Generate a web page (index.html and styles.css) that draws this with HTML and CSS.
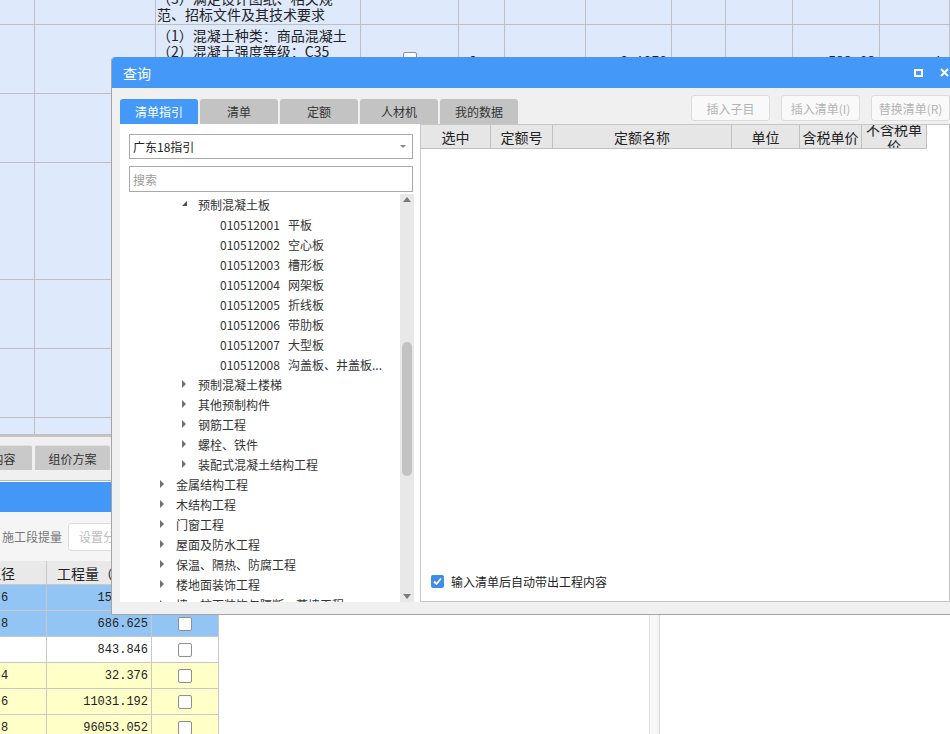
FILE: index.html
```html
<!DOCTYPE html>
<html lang="zh-CN">
<head>
<meta charset="utf-8">
<title>查询</title>
<link rel="stylesheet" href="styles.css">
</head>
<body>
<div class="page">
  <div class="top">
    <div class="trow r1">
      <div class="c"></div><div class="c"></div>
      <div class="c txt bot">（3）满足设计图纸、相关规<br>范、招标文件及其技术要求</div>
      <div class="c"></div><div class="c"></div><div class="c"></div><div class="c"></div><div class="c"></div><div class="c"></div><div class="c"></div><div class="c"></div>
    </div>
    <div class="trow r2">
      <div class="c"></div><div class="c"></div>
      <div class="c txt">（1）混凝土种类：商品混凝土<br>（2）混凝土强度等级：C35</div>
      <div class="c mid center"><span class="cb"></span></div>
      <div class="c mid num-l">0</div>
      <div class="c"></div>
      <div class="c mid num-r">0.1073</div>
      <div class="c"></div><div class="c"></div>
      <div class="c mid num-r">588.68</div>
      <div class="c mid num-far">1.10</div>
    </div>
    <div class="trow r3"><div class="c"></div><div class="c"></div><div class="c"></div><div class="c"></div><div class="c"></div><div class="c"></div><div class="c"></div><div class="c"></div><div class="c"></div><div class="c"></div><div class="c"></div></div>
    <div class="trow r4"><div class="c"></div><div class="c"></div><div class="c"></div><div class="c"></div><div class="c"></div><div class="c"></div><div class="c"></div><div class="c"></div><div class="c"></div><div class="c"></div><div class="c"></div></div>
    <div class="trow r5"><div class="c"></div><div class="c"></div><div class="c"></div><div class="c"></div><div class="c"></div><div class="c"></div><div class="c"></div><div class="c"></div><div class="c"></div><div class="c"></div><div class="c"></div></div>
    <div class="trow r6"><div class="c"></div><div class="c"></div><div class="c"></div><div class="c"></div><div class="c"></div><div class="c"></div><div class="c"></div><div class="c"></div><div class="c"></div><div class="c"></div><div class="c"></div></div>
    <div class="trow r7"><div class="c"></div><div class="c"></div><div class="c"></div><div class="c"></div><div class="c"></div><div class="c"></div><div class="c"></div><div class="c"></div><div class="c"></div><div class="c"></div><div class="c"></div></div>
  </div>

  <div class="lower">
    <div class="lpane">
      <div class="tabs2">
        <div class="t2 t2-first">工程内容</div>
        <div class="t2">组价方案</div>
      </div>
      <div class="bluebar"></div>
      <div class="tool2">
        <span class="lbl">施工段提量</span>
        <span class="btn2">设置分部分项</span>
      </div>
      <div class="tbl2">
        <div class="r2row hdr">
          <div class="d d1"><span class="clip">直径</span></div>
          <div class="d d2 hc">工程量（t）</div>
          <div class="d d3"></div>
        </div>
        <div class="r2row sel">
          <div class="d d1">6</div><div class="d d2 n">156.221</div><div class="d d3"><span class="cb"></span></div>
        </div>
        <div class="r2row sel">
          <div class="d d1">8</div><div class="d d2 n">686.625</div><div class="d d3"><span class="cb"></span></div>
        </div>
        <div class="r2row wh">
          <div class="d d1"></div><div class="d d2 n">843.846</div><div class="d d3"><span class="cb"></span></div>
        </div>
        <div class="r2row ye">
          <div class="d d1">4</div><div class="d d2 n">32.376</div><div class="d d3"><span class="cb"></span></div>
        </div>
        <div class="r2row ye">
          <div class="d d1">6</div><div class="d d2 n">11031.192</div><div class="d d3"><span class="cb"></span></div>
        </div>
        <div class="r2row ye">
          <div class="d d1">8</div><div class="d d2 n">96053.052</div><div class="d d3"><span class="cb"></span></div>
        </div>
      </div>
    </div>
    <div class="splitter"></div>
    <div class="rpane"></div>
  </div>

  <div class="dlg">
    <div class="dtitle">
      <span class="dt-text">查询</span>
      <span class="ico-max"></span>
      <svg class="ico-close" width="9" height="9" viewBox="0 0 9 9"><path d="M1 1 L8 8 M8 1 L1 8" stroke="#fff" stroke-width="2" fill="none"/></svg>
    </div>
    <div class="dbar">
      <div class="tab active">清单指引</div>
      <div class="tab">清单</div>
      <div class="tab">定额</div>
      <div class="tab">人材机</div>
      <div class="tab">我的数据</div>
      <div class="btns">
        <span class="dbtn">插入子目</span>
        <span class="dbtn">插入清单(I)</span>
        <span class="dbtn">替换清单(R)</span>
      </div>
    </div>
    <div class="dcontent">
      <div class="lp">
        <div class="sel-box"><span>广东18指引</span><span class="caret"></span></div>
        <div class="search">搜索</div>
        <div class="tree">
          <div class="tlist">
            <div class="node l2"><span class="arr open"></span>预制混凝土板</div>
            <div class="node l3"><span class="code">010512001</span>平板</div>
            <div class="node l3"><span class="code">010512002</span>空心板</div>
            <div class="node l3"><span class="code">010512003</span>槽形板</div>
            <div class="node l3"><span class="code">010512004</span>网架板</div>
            <div class="node l3"><span class="code">010512005</span>折线板</div>
            <div class="node l3"><span class="code">010512006</span>带肋板</div>
            <div class="node l3"><span class="code">010512007</span>大型板</div>
            <div class="node l3"><span class="code">010512008</span>沟盖板、井盖板...</div>
            <div class="node l2"><span class="arr"></span>预制混凝土楼梯</div>
            <div class="node l2"><span class="arr"></span>其他预制构件</div>
            <div class="node l2"><span class="arr"></span>钢筋工程</div>
            <div class="node l2"><span class="arr"></span>螺栓、铁件</div>
            <div class="node l2"><span class="arr"></span>装配式混凝土结构工程</div>
            <div class="node l1"><span class="arr"></span>金属结构工程</div>
            <div class="node l1"><span class="arr"></span>木结构工程</div>
            <div class="node l1"><span class="arr"></span>门窗工程</div>
            <div class="node l1"><span class="arr"></span>屋面及防水工程</div>
            <div class="node l1"><span class="arr"></span>保温、隔热、防腐工程</div>
            <div class="node l1"><span class="arr"></span>楼地面装饰工程</div>
            <div class="node l1"><span class="arr"></span>墙、柱面装饰与隔断、幕墙工程</div>
          </div>
          <div class="sb">
            <span class="sb-up"></span>
            <span class="sb-thumb"></span>
            <span class="sb-down"></span>
          </div>
        </div>
      </div>
      <div class="rp">
        <div class="thead">
          <div class="th w1">选中</div>
          <div class="th w2">定额号</div>
          <div class="th w3">定额名称</div>
          <div class="th w4">单位</div>
          <div class="th w5">含税单价</div>
          <div class="th w6 wrap">不含税单<br>价</div>
        </div>
        <div class="rbody"></div>
        <div class="opt">
          <span class="chk"><svg width="13" height="13" viewBox="0 0 13 13"><path d="M3 6.5 L5.5 9 L10 3.5" stroke="#fff" stroke-width="1.8" fill="none"/></svg></span>
          <span>输入清单后自动带出工程内容</span>
        </div>
      </div>
    </div>
  </div>
</div>
</body>
</html>
```
FILE: styles.css
```css
* { box-sizing: border-box; }
html, body { margin: 0; padding: 0; }
body {
  width: 950px;
  height: 734px;
  overflow: hidden;
  background: #fff;
  font-family: "Noto Sans CJK SC", "Noto Sans", sans-serif;
  font-size: 12px;
  color: #333;
}
.page { position: relative; width: 950px; height: 734px; overflow: hidden; }

/* ---------- top background table ---------- */
.top { background: #dee9fb; }
.trow {
  display: grid;
  grid-template-columns: 35px 121px 205px 98px 46px 81px 86px 54px 67px 87px 1fr;
}
.r1 { height: 25px; }
.r2, .r3, .r5, .r6 { height: 69px; }
.r4 { height: 117px; }
.r7 { height: 17px; }
.c {
  border-right: 1px solid #bfbfbf;
  border-bottom: 1px solid #bfbfbf;
  overflow: hidden;
  min-width: 0;
}
.txt {
  font-size: 14px;
  line-height: 16px;
  color: #222;
  padding: 2px 2px 0 1px;
  white-space: nowrap;
}
.bot { display: flex; flex-direction: column; justify-content: flex-end; padding: 0 2px 2px 1px; }
.mid { display: flex; align-items: center; font-family: "Liberation Mono", monospace; font-size: 13px; color: #222; }
.r2 .mid { padding-top: 4px; }
.r2 .center { padding-top: 0; }
.center { justify-content: center; }
.num-l { padding-left: 10px; }
.num-far { padding-left: 54px; }
.num-r { justify-content: flex-end; padding-right: 4px; }
.cb {
  display: inline-block;
  width: 14px;
  height: 14px;
  border: 1px solid #8f8f8f;
  border-radius: 2px;
  background: #fff;
}

/* ---------- lower background panes ---------- */
.lower {
  display: flex;
  height: 299px;
  border-top: 2px solid #c4c4c4;
}
.lpane { width: 649px; display: flex; flex-direction: column; background: #fff; overflow: hidden; }
.lpane > * { flex: none; }
.tabs2 {
  height: 44px;
  background: #f0f0f0;
  padding-top: 8px;
  display: flex;
  border-bottom: 1px solid #b8b8b8;
  overflow: hidden;
}
.t2 {
  width: 75px;
  height: 25px;
  margin-right: 3px;
  background: #c9c9c9;
  border-top: 1px solid #e0e0e0;
  border-radius: 2px 2px 0 0;
  display: flex;
  align-items: center;
  justify-content: center;
  font-size: 12px;
  color: #333;
  flex: none;
}
.t2-first { width: 81px; margin-left: -49px; }
.bluebar { height: 31px; border-top: 1px solid #fff; background: #4397f7; }
.tool2 {
  height: 49px;
  background: #f5f5f5;
  display: flex;
  align-items: center;
  padding-left: 2px;
  white-space: nowrap;
  overflow: hidden;
}
.lbl { color: #777; font-size: 12px; }
.btn2 {
  margin-left: 6px;
  height: 28px;
  padding: 0 10px;
  display: flex;
  align-items: center;
  border: 1px solid #dcdcdc;
  border-radius: 3px;
  background: #fff;
  color: #bbb;
}
.tbl2 { display: flex; flex-direction: column; }
.r2row { display: flex; height: 26px; flex: none; }
.r2row.hdr { height: 24px; }
.d {
  border-right: 1px solid #c8c8c8;
  border-bottom: 1px solid #c8c8c8;
  display: flex;
  align-items: center;
  overflow: hidden;
  white-space: nowrap;
  font-family: "Liberation Mono", monospace;
  font-size: 12px;
  color: #222;
}
.d1 { width: 47px; padding-left: 1px; }
.d2 { width: 105px; }
.d3 { width: 67px; justify-content: center; }
.hdr .d { background: #e9e9e9; font-family: "Noto Sans CJK SC", sans-serif; font-size: 14px; color: #222; }
.hc { justify-content: flex-start; padding-left: 10px; }
.clip { margin-left: -14px; }
.n { justify-content: flex-end; padding-right: 3px; }
.sel .d { background: #92c5f3; }
.wh .d { background: #fff; }
.ye .d { background: #ffffc8; }
.splitter {
  width: 11px;
  background: #f7f7f7;
  border-left: 1px solid #e2e2e2;
  border-right: 1px solid #d6d6d6;
}
.rpane { flex: 1; background: #fff; }

/* ---------- dialog ---------- */
.dlg {
  position: absolute;
  left: 111px;
  top: 57px;
  width: 848px;
  height: 558px;
  background: #f0f0f0;
  border: 1px solid #a4a4a4;
  border-top: none;
  border-radius: 4px 4px 0 0;
  display: flex;
  flex-direction: column;
}
.dlg > * { flex: none; }
.dtitle {
  height: 31px;
  background: #4398f8;
  border-radius: 4px 4px 0 0;
  display: flex;
  align-items: center;
  padding: 0 9px 0 11px;
  color: #fff;
  font-size: 14px;
}
.dt-text { flex: 1; }
.ico-max {
  width: 9px;
  height: 8px;
  border: 2px solid #fff;
  margin-right: 17px;
}
.ico-close { display: block; }
.dbar {
  height: 36px;
  display: flex;
  align-items: flex-end;
  padding: 0 8px;
}
.tab {
  width: 78px;
  height: 25px;
  margin-right: 2px;
  background: #c3c3c3;
  border-radius: 3px 3px 0 0;
  display: flex;
  align-items: center;
  justify-content: center;
  font-size: 12px;
  color: #333;
}
.tab.active { background: #4398f8; color: #fff; }
.btns {
  margin-left: auto;
  align-self: flex-start;
  margin-top: 7px;
  display: flex;
  gap: 11px;
}
.dbtn {
  width: 79px;
  height: 26px;
  display: flex;
  align-items: center;
  justify-content: center;
  border: 1px solid #dcdcdc;
  border-radius: 3px;
  background: #f9f9f9;
  color: #b4b4b4;
  font-size: 12px;
}
.dcontent {
  height: 478px;
  display: flex;
  padding: 0 8px;
}
.lp {
  width: 300px;
  background: #fff;
  display: flex;
  flex-direction: column;
  padding: 10px 7px 0 9px;
}
.lp > * { flex: none; }
.sel-box {
  height: 25px;
  border: 1px solid #a9a9a9;
  display: flex;
  align-items: center;
  justify-content: space-between;
  padding: 0 6px 0 3px;
  font-size: 12px;
  color: #222;
}
.caret {
  width: 0;
  height: 0;
  border-left: 3px solid transparent;
  border-right: 3px solid transparent;
  border-top: 3px solid #888;
}
.search {
  margin-top: 7px;
  height: 26px;
  border: 1px solid #a9a9a9;
  display: flex;
  align-items: center;
  padding-left: 3px;
  color: #9a9a9a;
  font-size: 12px;
}
.lp > .tree {
  flex: 1;
  display: flex;
  margin: 2px -1px 0 -9px;
  overflow: hidden;
  min-height: 0;
}
.tlist { flex: 1; overflow: hidden; }
.node {
  height: 20px;
  display: flex;
  align-items: center;
  white-space: nowrap;
  font-size: 12px;
  color: #333;
}
.l1 { padding-left: 39px; }
.l2 { padding-left: 61px; }
.l3 { padding-left: 100px; }
.arr {
  width: 17px;
  height: 8px;
  flex: none;
  position: relative;
}
.arr::before {
  content: "";
  position: absolute;
  left: 1px;
  top: 0;
  width: 0;
  height: 0;
  border-left: 4px solid #707070;
  border-top: 4px solid transparent;
  border-bottom: 4px solid transparent;
}
.arr.open::before {
  left: 1px;
  top: 1px;
  border-top: none;
  border-left: 5px solid transparent;
  border-bottom: 5px solid #505050;
}
.code { margin-right: 8px; }
.sb {
  width: 14px;
  background: #e8e8e8;
  display: flex;
  flex-direction: column;
  align-items: center;
  flex: none;
}
.sb-up, .sb-down {
  width: 0;
  height: 0;
  border-left: 4px solid transparent;
  border-right: 4px solid transparent;
  flex: none;
}
.sb-up { margin-top: 3px; border-bottom: 5px solid #7a7a7a; }
.sb-down { margin-top: auto; margin-bottom: 3px; border-top: 5px solid #7a7a7a; }
.sb-thumb {
  width: 10px;
  height: 134px;
  margin-top: 140px;
  background: #c2c2c2;
  border-radius: 5px;
  flex: none;
}
.rp {
  flex: 1;
  background: #fff;
  border: 1px solid #c6c6c6;
  display: flex;
  flex-direction: column;
}
.thead { display: flex; height: 24px; flex: none; }
.th {
  height: 24px;
  background: #e6e6e6;
  border-right: 1px solid #c0c0c0;
  border-bottom: 1px solid #c0c0c0;
  display: flex;
  align-items: center;
  justify-content: center;
  text-align: center;
  font-size: 14px;
  line-height: 16px;
  color: #222;
  overflow: hidden;
}
.wrap { line-height: 16px; }
.w1 { width: 70px; }
.w2 { width: 62px; }
.w3 { width: 179px; }
.w4 { width: 68px; }
.w5 { width: 62px; }
.w6 { width: 65px; }
.rbody { flex: 1; }
.opt {
  display: flex;
  align-items: center;
  padding: 0 0 11px 10px;
  font-size: 12px;
  color: #222;
}
.chk {
  width: 13px;
  height: 13px;
  border-radius: 2px;
  background: #3f8de9;
  margin-right: 7px;
  display: flex;
}
```
